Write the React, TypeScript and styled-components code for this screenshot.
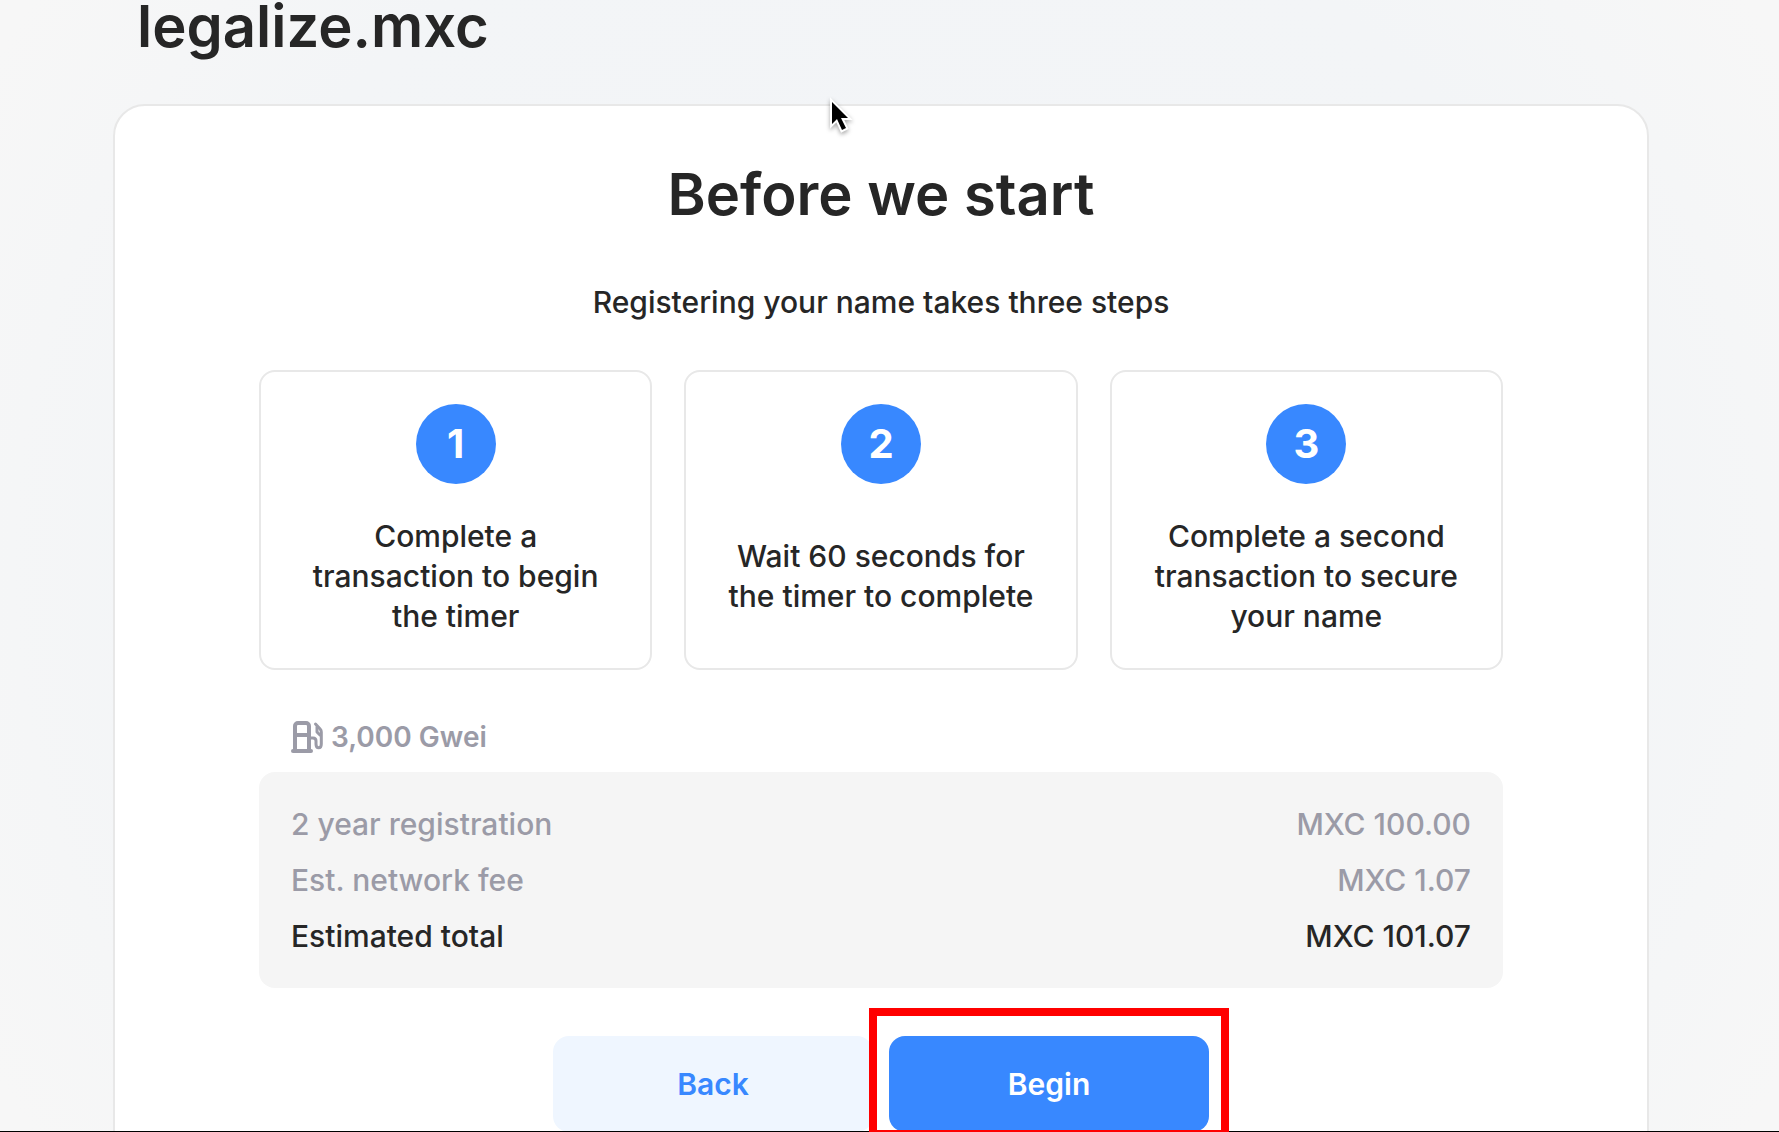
import React from "react";
import styled, { createGlobalStyle } from "styled-components";

const color = {
  text: "#262626",
  muted: "#9b9ba7",
  accent: "#3888ff",
  accentSoft: "#eff6ff",
  border: "#e8e8e8",
  surface: "#f5f5f5",
};

const GlobalStyle = createGlobalStyle`
  *, *::before, *::after { box-sizing: border-box; }
  body {
    margin: 0;
    color: ${color.text};
    font-family: Inter, "Liberation Sans", sans-serif;
    font-size: 30px;
    font-weight: 500;
    line-height: 40px;
    -webkit-font-smoothing: antialiased;
  }
  h1, h2, p, ol, table { margin: 0; padding: 0; }
`;

const Page = styled.div`
  position: relative;
  height: 100vh;
  overflow: hidden;
  padding: 0 130px 0 113px;
  background: radial-gradient(ellipse 58% 90% at 50% 50%, #f2f4f7 0%, #f3f5f7 70%, #f7f7f7 100%);

  &::after {
    content: "";
    position: absolute;
    inset: auto 0 0;
    height: 1px;
    background: #000;
  }
`;

const DomainName = styled.h1`
  padding: 0 24px;
  margin-bottom: 52px;
  font-size: 58px;
  font-weight: 600;
  line-height: 52px;
`;

const Panel = styled.main`
  display: flex;
  flex-direction: column;
  gap: 48px;
  padding: 48px 144px;
  border: 2px solid ${color.border};
  border-radius: 32px;
  background: #fff;
`;

const Title = styled.h2`
  font-size: 58px;
  font-weight: 600;
  line-height: 80px;
  text-align: center;
`;

const Lead = styled.p`
  text-align: center;
`;

const Steps = styled.ol`
  display: grid;
  grid-template-columns: repeat(3, 1fr);
  gap: 32px;
  list-style: none;
`;

const Step = styled.li`
  display: flex;
  flex-direction: column;
  align-items: center;
  gap: 32px;
  padding: 32px;
  border: 2px solid ${color.border};
  border-radius: 16px;
  text-align: center;
`;

const StepNumber = styled.span`
  display: grid;
  place-items: center;
  width: 80px;
  height: 80px;
  border-radius: 50%;
  background: ${color.accent};
  color: #fff;
  font-size: 40px;
  font-weight: 700;
`;

const StepText = styled.p`
  display: flex;
  flex: 1;
  align-items: center;
`;

const Costs = styled.section`
  display: flex;
  flex-direction: column;
  gap: 16px;
`;

const GasPrice = styled.div`
  display: flex;
  align-items: center;
  gap: 8px;
  padding: 0 32px;
  color: ${color.muted};
  font-size: 28px;
  font-weight: 600;
  line-height: 38px;
`;

const Invoice = styled.div`
  padding: 24px 32px;
  border-radius: 16px;
  background: ${color.surface};
`;

const InvoiceTable = styled.table`
  width: 100%;
  border-collapse: collapse;
`;

const InvoiceRow = styled.tr<{ $total?: boolean }>`
  color: ${(p) => (p.$total ? color.text : color.muted)};

  th, td {
    padding: 8px 0;
    font-weight: 500;
    text-align: left;
  }
  td { text-align: right; }
`;

const Actions = styled.div`
  display: flex;
  justify-content: center;
  gap: 16px;
`;

const Button = styled.button<{ $primary?: boolean }>`
  width: 320px;
  height: 96px;
  border: 0;
  border-radius: 16px;
  background: ${(p) => (p.$primary ? color.accent : color.accentSoft)};
  color: ${(p) => (p.$primary ? "#fff" : color.accent)};
  font: inherit;
  font-weight: 600;
  cursor: pointer;
`;

const Highlighted = styled.div`
  position: relative;
  z-index: 1;
  display: flex;

  &::after {
    content: "";
    position: absolute;
    inset: -28px -20px -6px;
    border: 8px solid #f00;
    pointer-events: none;
  }
`;

const Pointer = styled.svg`
  position: absolute;
  top: 96px;
  left: 826px;
  overflow: visible;
  filter: drop-shadow(0 2px 2px rgba(0, 0, 0, 0.35));
`;

const GasPumpIcon = () => (
  <svg width="32" height="32" viewBox="0 0 32 32" fill="none" stroke="currentColor" strokeWidth="4" strokeLinecap="round" strokeLinejoin="round" aria-hidden="true">
    <path d="M4 30V5a3 3 0 0 1 3-3h8a3 3 0 0 1 3 3v25M4 14h14" />
    <path d="M2 30h18" />
    <path d="M24.5 3l4.6 5q1.2 1.3 1.2 3v12c0 5-5.3 5-5.3 0v-3q0-3-3-3h-2" strokeWidth="3" />
    <path d="M26 6v5l3 3" strokeWidth="3" />
  </svg>
);

const steps = [
  "Complete a transaction to begin the timer",
  "Wait 60 seconds for the timer to complete",
  "Complete a second transaction to secure your name",
];

const invoice = [
  { label: "2 year registration", amount: "MXC 100.00" },
  { label: "Est. network fee", amount: "MXC 1.07" },
  { label: "Estimated total", amount: "MXC 101.07", total: true },
];

export default function App() {
  return (
    <>
      <GlobalStyle />
      <Page>
        <DomainName>legalize.mxc</DomainName>
        <Panel>
          <Title>Before we start</Title>
          <Lead>Registering your name takes three steps</Lead>
          <Steps>
            {steps.map((text, i) => (
              <Step key={text}>
                <StepNumber>{i + 1}</StepNumber>
                <StepText>{text}</StepText>
              </Step>
            ))}
          </Steps>
          <Costs>
            <GasPrice>
              <GasPumpIcon />
              <span>3,000 Gwei</span>
            </GasPrice>
            <Invoice>
              <InvoiceTable>
                <tbody>
                  {invoice.map((row) => (
                    <InvoiceRow key={row.label} $total={row.total}>
                      <th scope="row">{row.label}</th>
                      <td>{row.amount}</td>
                    </InvoiceRow>
                  ))}
                </tbody>
              </InvoiceTable>
            </Invoice>
          </Costs>
          <Actions>
            <Button type="button">Back</Button>
            <Highlighted>
              <Button type="button" $primary>Begin</Button>
            </Highlighted>
          </Actions>
        </Panel>
        <Pointer width="26" height="38" viewBox="0 0 26 38" aria-hidden="true">
          <path d="M6 6v22l5-5 5 11 4-2-5-10h7z" fill="#000" stroke="#fff" strokeWidth="4" paintOrder="stroke" />
        </Pointer>
      </Page>
    </>
  );
}
